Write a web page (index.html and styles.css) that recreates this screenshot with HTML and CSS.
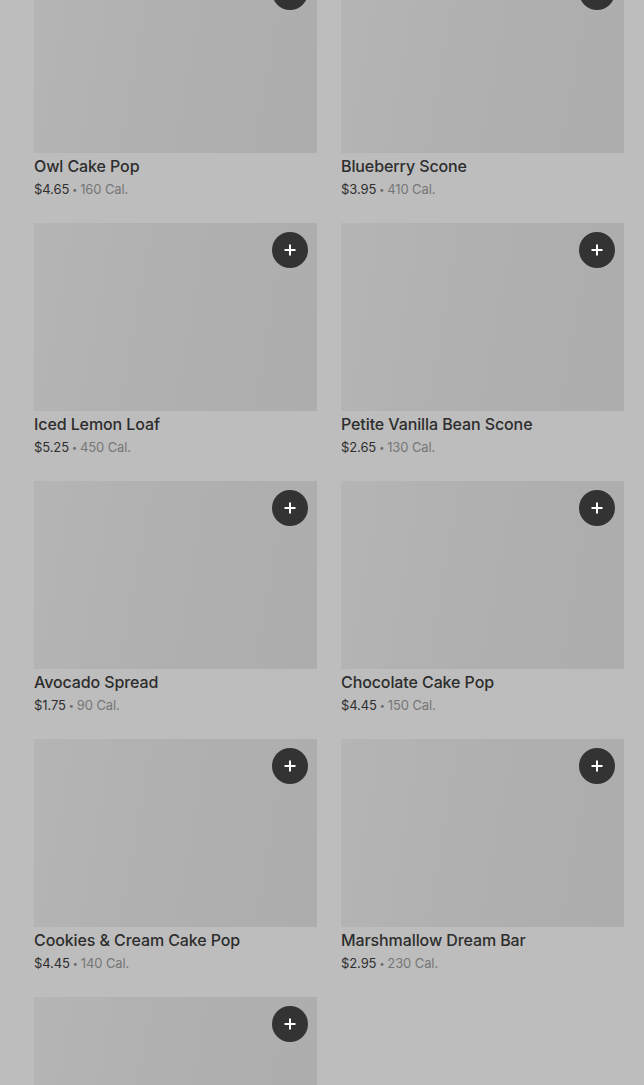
FILE: index.html
```html
<!DOCTYPE html>
<html lang="en">
<head>
<meta charset="utf-8">
<title>Menu</title>
<link rel="stylesheet" href="styles.css">
</head>
<body>
<main class="grid">
  <article class="card">
    <div class="thumb"><button class="add" aria-label="Add"><svg viewBox="0 0 14 14" width="14" height="14"><path d="M7 1.5v11M1.5 7h11" stroke="#fff" stroke-width="2"/></svg></button></div>
    <h3 class="name">Owl Cake Pop</h3>
    <p class="meta"><span class="price">$4.65</span><span class="dot">•</span><span class="cal">160 Cal.</span></p>
  </article>
  <article class="card">
    <div class="thumb"><button class="add" aria-label="Add"><svg viewBox="0 0 14 14" width="14" height="14"><path d="M7 1.5v11M1.5 7h11" stroke="#fff" stroke-width="2"/></svg></button></div>
    <h3 class="name">Blueberry Scone</h3>
    <p class="meta"><span class="price">$3.95</span><span class="dot">•</span><span class="cal">410 Cal.</span></p>
  </article>
  <article class="card">
    <div class="thumb"><button class="add" aria-label="Add"><svg viewBox="0 0 14 14" width="14" height="14"><path d="M7 1.5v11M1.5 7h11" stroke="#fff" stroke-width="2"/></svg></button></div>
    <h3 class="name">Iced Lemon Loaf</h3>
    <p class="meta"><span class="price">$5.25</span><span class="dot">•</span><span class="cal">450 Cal.</span></p>
  </article>
  <article class="card">
    <div class="thumb"><button class="add" aria-label="Add"><svg viewBox="0 0 14 14" width="14" height="14"><path d="M7 1.5v11M1.5 7h11" stroke="#fff" stroke-width="2"/></svg></button></div>
    <h3 class="name">Petite Vanilla Bean Scone</h3>
    <p class="meta"><span class="price">$2.65</span><span class="dot">•</span><span class="cal">130 Cal.</span></p>
  </article>
  <article class="card">
    <div class="thumb"><button class="add" aria-label="Add"><svg viewBox="0 0 14 14" width="14" height="14"><path d="M7 1.5v11M1.5 7h11" stroke="#fff" stroke-width="2"/></svg></button></div>
    <h3 class="name">Avocado Spread</h3>
    <p class="meta"><span class="price">$1.75</span><span class="dot">•</span><span class="cal">90 Cal.</span></p>
  </article>
  <article class="card">
    <div class="thumb"><button class="add" aria-label="Add"><svg viewBox="0 0 14 14" width="14" height="14"><path d="M7 1.5v11M1.5 7h11" stroke="#fff" stroke-width="2"/></svg></button></div>
    <h3 class="name">Chocolate Cake Pop</h3>
    <p class="meta"><span class="price">$4.45</span><span class="dot">•</span><span class="cal">150 Cal.</span></p>
  </article>
  <article class="card">
    <div class="thumb"><button class="add" aria-label="Add"><svg viewBox="0 0 14 14" width="14" height="14"><path d="M7 1.5v11M1.5 7h11" stroke="#fff" stroke-width="2"/></svg></button></div>
    <h3 class="name">Cookies &amp; Cream Cake Pop</h3>
    <p class="meta"><span class="price">$4.45</span><span class="dot">•</span><span class="cal">140 Cal.</span></p>
  </article>
  <article class="card">
    <div class="thumb"><button class="add" aria-label="Add"><svg viewBox="0 0 14 14" width="14" height="14"><path d="M7 1.5v11M1.5 7h11" stroke="#fff" stroke-width="2"/></svg></button></div>
    <h3 class="name">Marshmallow Dream Bar</h3>
    <p class="meta"><span class="price">$2.95</span><span class="dot">•</span><span class="cal">230 Cal.</span></p>
  </article>
  <article class="card">
    <div class="thumb"><button class="add" aria-label="Add"><svg viewBox="0 0 14 14" width="14" height="14"><path d="M7 1.5v11M1.5 7h11" stroke="#fff" stroke-width="2"/></svg></button></div>
    <h3 class="name">Cake Pop</h3>
    <p class="meta"><span class="price">$3.25</span><span class="dot">•</span><span class="cal">170 Cal.</span></p>
  </article>
</main>
</body>
</html>
```

FILE: styles.css
```css
html, body {
  margin: 0;
  padding: 0;
  background: #bdbdbd;
}
body {
  font-family: Inter, "Noto Sans", sans-serif;
  color: #2e2e2e;
}
.grid {
  display: grid;
  grid-template-columns: 283px 283px;
  column-gap: 24px;
  row-gap: 24px;
  padding: 0 20px 0 34px;
  margin-top: -35px;
}
.card {
  display: flex;
  flex-direction: column;
}
.thumb {
  position: relative;
  height: 188px;
  background: linear-gradient(100deg, #b5b5b5 0%, #b0b0b0 45%, #adadad 100%);
}
.add {
  position: absolute;
  top: 9px;
  right: 9px;
  width: 36px;
  height: 36px;
  border: 0;
  padding: 0;
  border-radius: 50%;
  background: #333333;
  display: flex;
  align-items: center;
  justify-content: center;
}
.add svg { display: block; }
.name {
  margin: 2px 0 0;
  font-size: 16px;
  line-height: 22px;
  font-weight: 500;
  color: #2d2d2d;
  letter-spacing: -0.1px;
}
.meta {
  margin: 2px 0 0;
  height: 20px;
  font-size: 13px;
  line-height: 20px;
  letter-spacing: -0.1px;
  color: #737373;
  white-space: nowrap;
}
.price { color: #2f2f2f; }
.dot {
  font-size: 9px;
  line-height: 0;
  margin: 0 3px;
  color: #6a6a6a;
  vertical-align: 1px;
}
.cal { color: #767676; }
```
